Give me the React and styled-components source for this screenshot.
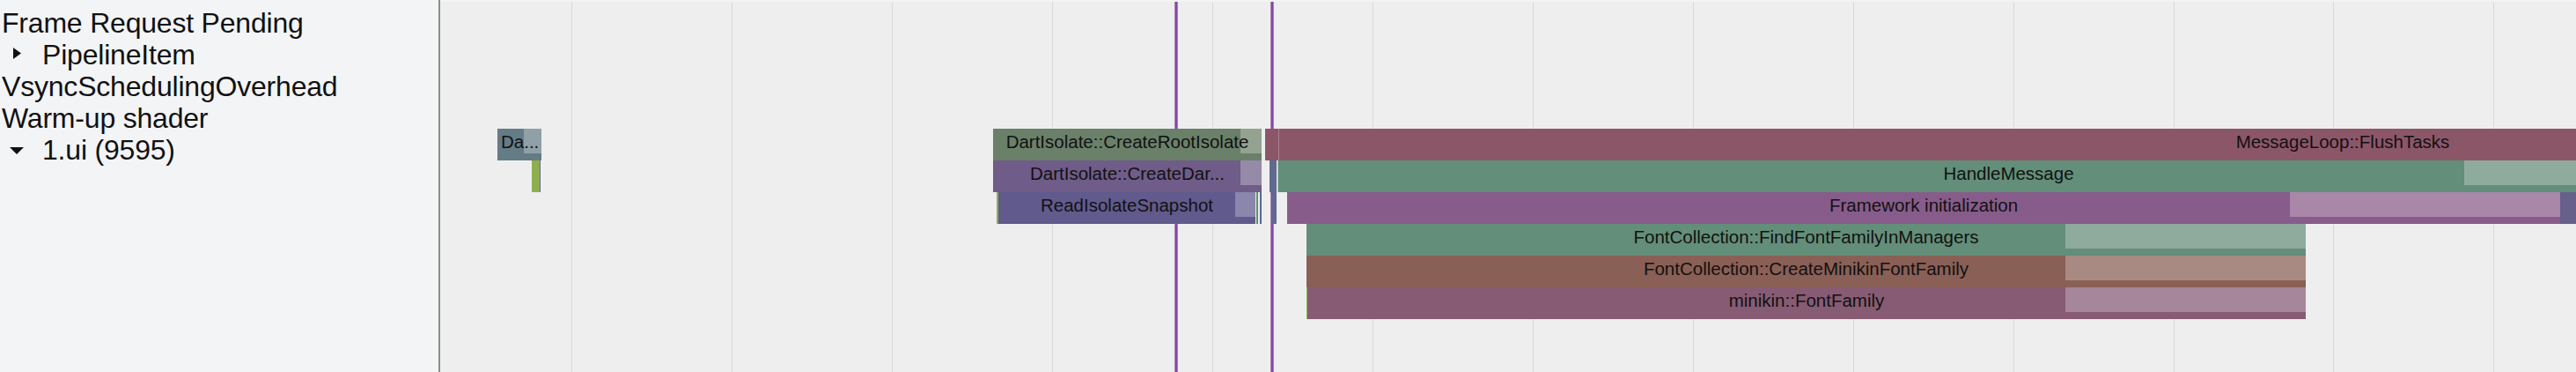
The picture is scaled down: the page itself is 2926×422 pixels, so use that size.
import React from 'react'
import styled, { createGlobalStyle } from 'styled-components'

const Global = createGlobalStyle`
  html, body { margin: 0; padding: 0; }
  body {
    background: #eeeeee;
    font-family: "Liberation Sans", Arial, sans-serif;
    color: #111;
  }
`

const Page = styled.div`
  display: flex;
  width: 2926px;
  height: 422px;
  overflow: hidden;
`

const Tree = styled.div`
  width: 498px;
  flex-shrink: 0;
  background: #f3f4f6;
  border-right: 2px solid #8c8c8c;
  padding-top: 8px;
  box-sizing: content-box;
`

const TreeRow = styled.div`
  display: flex;
  align-items: center;
  height: 36px;
  padding-left: ${p => (p.$toggle ? 10 : 2)}px;
  font-size: 32px;
  line-height: 36px;
  white-space: nowrap;
  letter-spacing: -0.2px;
`

const Toggle = styled.svg`
  width: 24px;
  height: 24px;
  margin-right: 14px;
  flex-shrink: 0;
  fill: #111;
`

const Timeline = styled.div`
  position: relative;
  flex: 1;
  border-top: 2px solid #f3f4f6;
  background: #eeeeee;
  overflow: hidden;
`

const GridLine = styled.div`
  position: absolute;
  top: 0;
  bottom: 0;
  width: 1px;
  background: #d9d9d9;
`

const Marker = styled.div`
  position: absolute;
  top: -2px;
  bottom: 0;
  width: 2px;
  background: #84499f;
  border-left: 1px solid #a77fba;
  border-right: 1px solid #a77fba;
`

const Bar = styled.div`
  position: absolute;
  height: 36px;
  background: ${p => p.$color};
  display: flex;
  justify-content: ${p => (p.$left ? 'flex-start' : 'center')};
  padding-left: ${p => (p.$left ? 4 : 0)}px;
  box-sizing: border-box;
  z-index: 2;
`

const Self = styled.div`
  position: absolute;
  top: 0;
  right: 0;
  height: 28px;
  background: ${p => p.$color};
`

const Label = styled.span`
  position: relative;
  font-size: 20.5px;
  line-height: 30px;
  white-space: nowrap;
  color: #111;
`

const ORIGIN = 500
const ROW_TOP = 144
const ROW_H = 36

const bars = [
  { row: 0, x: 565, end: 615, color: '#647c86', self: 595, selfColor: '#8fa0a6', label: 'Da...', left: true },
  { row: 1, x: 604, end: 613, color: '#8db04e' },
  { row: 1, x: 613, end: 614, color: '#6d6796' },

  { row: 0, x: 1128, end: 1433, color: '#6a8069', self: 1409, selfColor: '#93a38f', label: 'DartIsolate::CreateRootIsolate' },
  { row: 1, x: 1128, end: 1433, color: '#6f5c89', self: 1409, selfColor: '#968aa9', label: 'DartIsolate::CreateDar...' },
  { row: 2, x: 1132, end: 1134, color: '#8db04e' },
  { row: 2, x: 1134, end: 1426, color: '#615a8d', self: 1403, selfColor: '#8a86ac', label: 'ReadIsolateSnapshot' },
  { row: 2, x: 1427, end: 1429, color: '#5e8f6e' },
  { row: 2, x: 1431, end: 1433, color: '#5c6691' },

  { row: 0, x: 1437, end: 3885, color: '#8c5669', label: 'MessageLoop::FlushTasks' },
  { row: 0, x: 1452, end: 1453, color: '#a88190' },
  { row: 1, x: 1442, end: 1450, color: '#5f6a8f' },
  { row: 2, x: 1445, end: 1450, color: '#5f6a8f' },
  { row: 1, x: 1451, end: 3112, color: '#638e79', self: 2799, selfColor: '#8eab9d', label: 'HandleMessage' },
  { row: 1, x: 1451, end: 1452, color: '#a9c1b4' },
  { row: 2, x: 1462, end: 2908, color: '#875c8b', self: 2601, selfColor: '#a887a9', label: 'Framework initialization' },
  { row: 2, x: 2908, end: 3000, color: '#67608a' },

  { row: 3, x: 1484, end: 2619, color: '#638e79', self: 2346, selfColor: '#8eab9d', label: 'FontCollection::FindFontFamilyInManagers' },
  { row: 4, x: 1484, end: 2619, color: '#8a5f55', self: 2346, selfColor: '#a88a82', label: 'FontCollection::CreateMinikinFontFamily' },
  { row: 5, x: 1484, end: 1485, color: '#8db04e' },
  { row: 5, x: 1485, end: 2619, color: '#875b73', self: 2346, selfColor: '#a6869a', label: 'minikin::FontFamily' },
]

const gridLines = Array.from({ length: 13 }, (_, i) => 649 + i * 181.95)
const markers = [1334, 1443]

const treeRows = [
  { label: 'Frame Request Pending' },
  { label: 'PipelineItem', toggle: 'right' },
  { label: 'VsyncSchedulingOverhead' },
  { label: 'Warm-up shader' },
  { label: '1.ui (9595)', toggle: 'down' },
]

function Arrow({ dir }) {
  return (
    <Toggle viewBox="0 0 24 24">
      {dir === 'right'
        ? <polygon points="5,4 14,10.5 5,17" />
        : <polygon points="1,9 17,9 9,17" />}
    </Toggle>
  )
}

export default function App() {
  return (
    <>
      <Global />
      <Page>
        <Tree>
          {treeRows.map((r, i) => (
            <TreeRow key={i} $toggle={!!r.toggle}>
              {r.toggle && <Arrow dir={r.toggle} />}
              {r.label}
            </TreeRow>
          ))}
        </Tree>

        <Timeline>
          {gridLines.map((x, i) => (
            <GridLine key={i} style={{ left: Math.round(x) - ORIGIN }} />
          ))}
          {markers.map((x, i) => (
            <Marker key={i} style={{ left: x - ORIGIN }} />
          ))}
          {bars.map((b, i) => (
            <Bar
              key={i}
              $color={b.color}
              $left={b.left}
              style={{ left: b.x - ORIGIN, width: b.end - b.x, top: ROW_TOP + b.row * ROW_H }}
            >
              {b.self && <Self $color={b.selfColor} style={{ width: b.end - b.self }} />}
              {b.label && <Label>{b.label}</Label>}
            </Bar>
          ))}
        </Timeline>
      </Page>
    </>
  )
}
